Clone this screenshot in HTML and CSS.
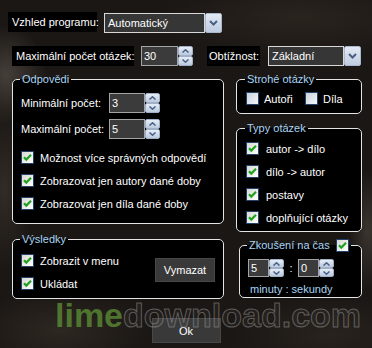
FILE: index.html
```html
<!DOCTYPE html>
<html lang="cs">
<head>
<meta charset="utf-8">
<title>Nastavení</title>
<link rel="stylesheet" href="styles.css">
</head>
<body>
<div class="dialog">
  <div class="row r1">
    <span class="lbl lbl-vzhled">Vzhled programu:</span>
    <div class="combo combo-vzhled">
      <span class="field">Automatický</span>
      <span class="drop"><svg width="9" height="6" viewBox="0 0 9 6"><path d="M1 1 L4.5 4.5 L8 1" fill="none" stroke="#4a5f86" stroke-width="2"/></svg></span>
    </div>
  </div>

  <div class="row r2">
    <span class="lbl lbl-max">Maximální počet otázek:</span>
    <div class="spin spin-max">
      <span class="sfield">30</span>
      <span class="sbtns">
        <span class="sb"><svg width="7" height="4" viewBox="0 0 7 4"><path d="M0.5 3.5 L3.5 0.8 L6.5 3.5" fill="none" stroke="#4a5f86" stroke-width="1.5"/></svg></span>
        <span class="sb"><svg width="7" height="4" viewBox="0 0 7 4"><path d="M0.5 0.5 L3.5 3.2 L6.5 0.5" fill="none" stroke="#4a5f86" stroke-width="1.5"/></svg></span>
      </span>
    </div>
    <span class="lbl lbl-obt">Obtížnost:</span>
    <div class="combo combo-obt">
      <span class="field">Základní</span>
      <span class="drop"><svg width="9" height="6" viewBox="0 0 9 6"><path d="M1 1 L4.5 4.5 L8 1" fill="none" stroke="#4a5f86" stroke-width="2"/></svg></span>
    </div>
  </div>

  <div class="cols">
    <div class="col col-left">
      <fieldset class="grp grp-odp">
        <legend>Odpovědi</legend>
        <div class="frow">
          <span class="flabel">Minimální počet:</span>
          <div class="spin spin-odp">
            <span class="sfield">3</span>
            <span class="sbtns">
              <span class="sb"><svg width="7" height="4" viewBox="0 0 7 4"><path d="M0.5 3.5 L3.5 0.8 L6.5 3.5" fill="none" stroke="#4a5f86" stroke-width="1.5"/></svg></span>
              <span class="sb"><svg width="7" height="4" viewBox="0 0 7 4"><path d="M0.5 0.5 L3.5 3.2 L6.5 0.5" fill="none" stroke="#4a5f86" stroke-width="1.5"/></svg></span>
            </span>
          </div>
        </div>
        <div class="frow frow2">
          <span class="flabel">Maximální počet:</span>
          <div class="spin spin-odp">
            <span class="sfield">5</span>
            <span class="sbtns">
              <span class="sb"><svg width="7" height="4" viewBox="0 0 7 4"><path d="M0.5 3.5 L3.5 0.8 L6.5 3.5" fill="none" stroke="#4a5f86" stroke-width="1.5"/></svg></span>
              <span class="sb"><svg width="7" height="4" viewBox="0 0 7 4"><path d="M0.5 0.5 L3.5 3.2 L6.5 0.5" fill="none" stroke="#4a5f86" stroke-width="1.5"/></svg></span>
            </span>
          </div>
        </div>
        <div class="checks checks-odp">
          <div class="chk"><span class="cb on"><svg width="11" height="11" viewBox="0 0 11 11"><path d="M2 5.2 L4.3 7.6 L9 2.8" fill="none" stroke="#21a121" stroke-width="2.2"/></svg></span><span>Možnost více správných odpovědí</span></div>
          <div class="chk"><span class="cb on"><svg width="11" height="11" viewBox="0 0 11 11"><path d="M2 5.2 L4.3 7.6 L9 2.8" fill="none" stroke="#21a121" stroke-width="2.2"/></svg></span><span>Zobrazovat jen autory dané doby</span></div>
          <div class="chk"><span class="cb on"><svg width="11" height="11" viewBox="0 0 11 11"><path d="M2 5.2 L4.3 7.6 L9 2.8" fill="none" stroke="#21a121" stroke-width="2.2"/></svg></span><span>Zobrazovat jen díla dané doby</span></div>
        </div>
      </fieldset>

      <fieldset class="grp grp-vys">
        <legend>Výsledky</legend>
        <div class="vys-body">
          <div class="checks">
            <div class="chk"><span class="cb on"><svg width="11" height="11" viewBox="0 0 11 11"><path d="M2 5.2 L4.3 7.6 L9 2.8" fill="none" stroke="#21a121" stroke-width="2.2"/></svg></span><span>Zobrazit v menu</span></div>
            <div class="chk"><span class="cb on"><svg width="11" height="11" viewBox="0 0 11 11"><path d="M2 5.2 L4.3 7.6 L9 2.8" fill="none" stroke="#21a121" stroke-width="2.2"/></svg></span><span>Ukládat</span></div>
          </div>
          <button class="btn btn-vymazat" type="button">Vymazat</button>
        </div>
      </fieldset>
    </div>

    <div class="col col-right">
      <fieldset class="grp grp-stroh">
        <legend>Strohé otázky</legend>
        <div class="stroh-row">
          <div class="chk chk-autori"><span class="cb off"></span><span>Autoři</span></div>
          <div class="chk"><span class="cb off"></span><span>Díla</span></div>
        </div>
      </fieldset>

      <fieldset class="grp grp-typy">
        <legend>Typy otázek</legend>
        <div class="checks">
          <div class="chk"><span class="cb on"><svg width="11" height="11" viewBox="0 0 11 11"><path d="M2 5.2 L4.3 7.6 L9 2.8" fill="none" stroke="#21a121" stroke-width="2.2"/></svg></span><span>autor -&gt; dílo</span></div>
          <div class="chk"><span class="cb on"><svg width="11" height="11" viewBox="0 0 11 11"><path d="M2 5.2 L4.3 7.6 L9 2.8" fill="none" stroke="#21a121" stroke-width="2.2"/></svg></span><span>dílo -&gt; autor</span></div>
          <div class="chk"><span class="cb on"><svg width="11" height="11" viewBox="0 0 11 11"><path d="M2 5.2 L4.3 7.6 L9 2.8" fill="none" stroke="#21a121" stroke-width="2.2"/></svg></span><span>postavy</span></div>
          <div class="chk"><span class="cb on"><svg width="11" height="11" viewBox="0 0 11 11"><path d="M2 5.2 L4.3 7.6 L9 2.8" fill="none" stroke="#21a121" stroke-width="2.2"/></svg></span><span>doplňující otázky</span></div>
        </div>
      </fieldset>

      <fieldset class="grp grp-cas">
        <legend>Zkoušení na čas<span class="cb on cb-legend"><svg width="11" height="11" viewBox="0 0 11 11"><path d="M2 5.2 L4.3 7.6 L9 2.8" fill="none" stroke="#21a121" stroke-width="2.2"/></svg></span></legend>
        <div class="cas-row">
          <div class="spin spin-cas">
            <span class="sfield">5</span>
            <span class="sbtns">
              <span class="sb"><svg width="7" height="4" viewBox="0 0 7 4"><path d="M0.5 3.5 L3.5 0.8 L6.5 3.5" fill="none" stroke="#4a5f86" stroke-width="1.5"/></svg></span>
              <span class="sb"><svg width="7" height="4" viewBox="0 0 7 4"><path d="M0.5 0.5 L3.5 3.2 L6.5 0.5" fill="none" stroke="#4a5f86" stroke-width="1.5"/></svg></span>
            </span>
          </div>
          <span class="sep">:</span>
          <div class="spin spin-cas">
            <span class="sfield">0</span>
            <span class="sbtns">
              <span class="sb"><svg width="7" height="4" viewBox="0 0 7 4"><path d="M0.5 3.5 L3.5 0.8 L6.5 3.5" fill="none" stroke="#4a5f86" stroke-width="1.5"/></svg></span>
              <span class="sb"><svg width="7" height="4" viewBox="0 0 7 4"><path d="M0.5 0.5 L3.5 3.2 L6.5 0.5" fill="none" stroke="#4a5f86" stroke-width="1.5"/></svg></span>
            </span>
          </div>
        </div>
        <div class="cas-note">minuty : sekundy</div>
      </fieldset>
    </div>
  </div>

  <div class="actions">
    <button class="btn btn-ok" type="button">Ok</button>
  </div>

  <div class="watermark"><span class="wm-lime">lime</span><span class="wm-rest">download.com</span></div>
</div>
</body>
</html>
```

FILE: styles.css
```css
* { box-sizing: border-box; }

html, body {
  margin: 0;
  padding: 0;
}

body {
  width: 372px;
  height: 348px;
  overflow: hidden;
  font-family: "Liberation Sans", Arial, sans-serif;
  font-size: 11px;
  color: #ffffff;
  background-color: #1b1714;
  background-image:
    radial-gradient(ellipse 40px 50px at 6px 75px, rgba(120, 112, 104, 0.45), transparent),
    radial-gradient(ellipse 30px 80px at 4px 190px, rgba(90, 82, 74, 0.35), transparent),
    radial-gradient(ellipse 140px 40px at 300px 18px, rgba(70, 60, 52, 0.35), transparent),
    radial-gradient(ellipse 20px 60px at 368px 230px, rgba(120, 110, 100, 0.35), transparent),
    radial-gradient(ellipse 90px 40px at 60px 330px, rgba(80, 70, 60, 0.35), transparent),
    radial-gradient(ellipse 100px 40px at 330px 335px, rgba(70, 62, 54, 0.3), transparent);
}

.dialog {
  position: relative;
  width: 372px;
  height: 348px;
  padding-top: 12px;
}

.row {
  display: flex;
  align-items: flex-start;
}

.r1 {
  margin-left: 8px;
  height: 21px;
}

.r2 {
  margin-left: 12px;
  margin-top: 13px;
  height: 20px;
}

.lbl {
  background: #000;
  line-height: 14px;
  height: 20px;
  padding: 3px 4px;
  white-space: nowrap;
}

.lbl-vzhled { width: 89px; }
.lbl-max { width: 122px; }
.lbl-obt { width: 53px; margin-left: 14px; padding-left: 2px; }

/* combo box */
.combo {
  display: flex;
  height: 20px;
}
.combo-vzhled { width: 118px; margin-left: 7px; margin-top: 1px; }
.combo-obt { width: 93px; margin-left: 8px; }

.combo .field {
  flex: 1;
  background: #363636;
  border: 1px solid #d8d8d8;
  line-height: 18px;
  padding-left: 3px;
  white-space: nowrap;
}

.combo .drop {
  width: 17px;
  background: linear-gradient(#e2e9f3, #bfcde0);
  border: 1px solid #aab8cc;
  border-radius: 2px;
  display: flex;
  align-items: center;
  justify-content: center;
}

/* spinner */
.spin {
  display: flex;
  height: 20px;
}
.spin-max { width: 52px; margin-left: 7px; }
.spin-odp { width: 51px; }
.spin-cas { width: 36px; height: 18px; }

.sfield {
  flex: 1;
  background: #3b3b3b;
  border: 1px solid #a4a4a4;
  line-height: 18px;
  padding-left: 2px;
}
.spin-cas .sfield { line-height: 16px; }

.sbtns {
  width: 15px;
  display: flex;
  flex-direction: column;
}

.sb {
  flex: 1;
  background: linear-gradient(#e6edf6, #bccadd);
  border: 1px solid #9fb0c8;
  border-radius: 2px;
  display: flex;
  align-items: center;
  justify-content: center;
}

/* columns */
.cols {
  display: flex;
  margin-left: 12px;
  margin-top: 7px;
}

.col {
  display: flex;
  flex-direction: column;
}
.col-left { width: 212px; }
.col-right { width: 126px; margin-left: 12px; }

/* group boxes */
.grp {
  margin: 0;
  min-width: 0;
  border: 1px solid #e4e4e4;
  border-radius: 5px;
  background: #000;
}

.grp legend {
  padding: 0 2px;
  margin-left: -1px;
  height: 13px;
  line-height: 13px;
  color: #a8d4f4;
  white-space: nowrap;
}

.grp-odp { padding: 7px 8px 8px 8px; }
.grp-vys { padding: 3px 8px 3px 8px; margin-top: 9px; }
.grp-stroh { padding: 4px 8px 6px 9px; }
.grp-typy { padding: 2px 8px 2px 9px; margin-top: 8px; }
.grp-cas { padding: 7px 6px 1px 8px; margin-top: 7px; margin-left: 3px; }

.frow {
  display: flex;
  align-items: center;
  height: 20px;
}
.frow2 { margin-top: 6px; }

.flabel {
  width: 88px;
  white-space: nowrap;
}

.checks {
  display: flex;
  flex-direction: column;
}
.checks-odp { margin-top: 7px; }

.chk {
  display: flex;
  align-items: center;
  height: 23px;
  gap: 6px;
  white-space: nowrap;
}
.grp-typy .chk { gap: 7px; }

.cb {
  display: inline-flex;
  width: 13px;
  height: 13px;
  flex: none;
  border: 1px solid #23426b;
  align-items: center;
  justify-content: center;
}
.cb.on { background: linear-gradient(135deg, #d6d8d2, #ffffff); }
.cb.off { background: linear-gradient(135deg, #c9d1de, #f4f6f8); }

.stroh-row {
  display: flex;
  height: 17px;
}
.stroh-row .chk { height: 17px; gap: 5px; }
.chk-autori { width: 59px; }

.vys-body {
  display: flex;
  align-items: flex-start;
}

.btn {
  font-family: "Liberation Sans", Arial, sans-serif;
  font-size: 11px;
  color: #fff;
  background: #393939;
  border: 1px solid #474747;
  padding: 0;
}

.btn-vymazat {
  width: 60px;
  height: 24px;
  margin-left: auto;
  margin-top: 9px;
}

.cb-legend {
  vertical-align: top;
  margin-left: 6px;
}

.cas-row {
  display: flex;
  height: 18px;
}

.sep {
  width: 14px;
  text-align: center;
  line-height: 18px;
}

.cas-note {
  margin-top: 6px;
  margin-left: 2px;
  line-height: 13px;
  color: #a8d4f4;
}

.actions {
  display: flex;
  justify-content: center;
  margin-top: 19px;
}

.btn-ok {
  width: 69px;
  height: 25px;
}

.watermark {
  position: absolute;
  left: 55px;
  top: 298px;
  font-family: "Liberation Sans", Arial, sans-serif;
  font-weight: bold;
  font-size: 34px;
  line-height: 34px;
  white-space: nowrap;
  pointer-events: none;
}

.wm-lime {
  color: rgba(96, 150, 56, 0.72);
}

.wm-rest {
  color: rgba(255, 255, 255, 0.05);
  -webkit-text-stroke: 1px rgba(150, 150, 150, 0.55);
}
```
